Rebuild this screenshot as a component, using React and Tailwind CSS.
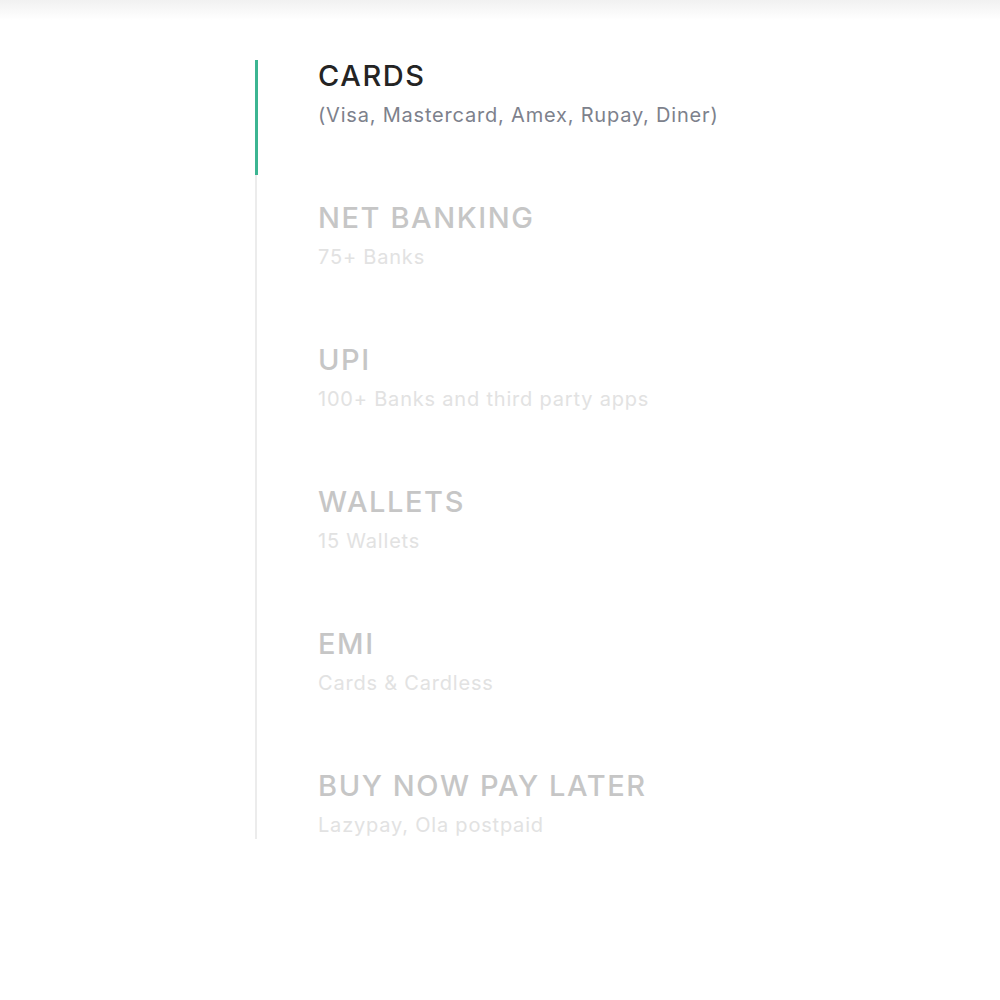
const methods = [
  { title: 'CARDS', sub: '(Visa, Mastercard, Amex, Rupay, Diner)' },
  { title: 'NET BANKING', sub: '75+ Banks' },
  { title: 'UPI', sub: '100+ Banks and third party apps' },
  { title: 'WALLETS', sub: '15 Wallets' },
  { title: 'EMI', sub: 'Cards & Cardless' },
  { title: 'BUY NOW PAY LATER', sub: 'Lazypay, Ola postpaid' },
]

export default function App() {
  const active = 0

  return (
    <div className="min-h-screen bg-white" style={{ fontFamily: 'Inter, "Noto Sans", sans-serif' }}>
      <div className="h-[20px] bg-gradient-to-b from-[#f1f1f1] to-white" />
      <ul className="ml-[255px] mt-[40px] border-l-2 border-[#ececec] flex flex-col gap-[73px] w-fit pr-10">
        {methods.map((m, i) => (
          <li key={m.title} className="relative pl-[61px] cursor-pointer">
            {i === active && (
              <span className="absolute -left-[2px] top-0 h-[115px] w-[3px] bg-[#3cb592]" />
            )}
            <h3
              className={`h-[31px] leading-[31px] text-[29px] font-medium tracking-[0.055em] ${
                i === active ? 'text-[#242424]' : 'text-[#c6c6c6]'
              }`}
            >
              {m.title}
            </h3>
            <p
              className={`mt-[10px] h-[28px] leading-[28px] text-[20px] tracking-[0.04em] ${
                i === active ? 'text-[#7d818c]' : 'text-[#e2e2e2]'
              }`}
            >
              {m.sub}
            </p>
          </li>
        ))}
      </ul>
    </div>
  )
}
